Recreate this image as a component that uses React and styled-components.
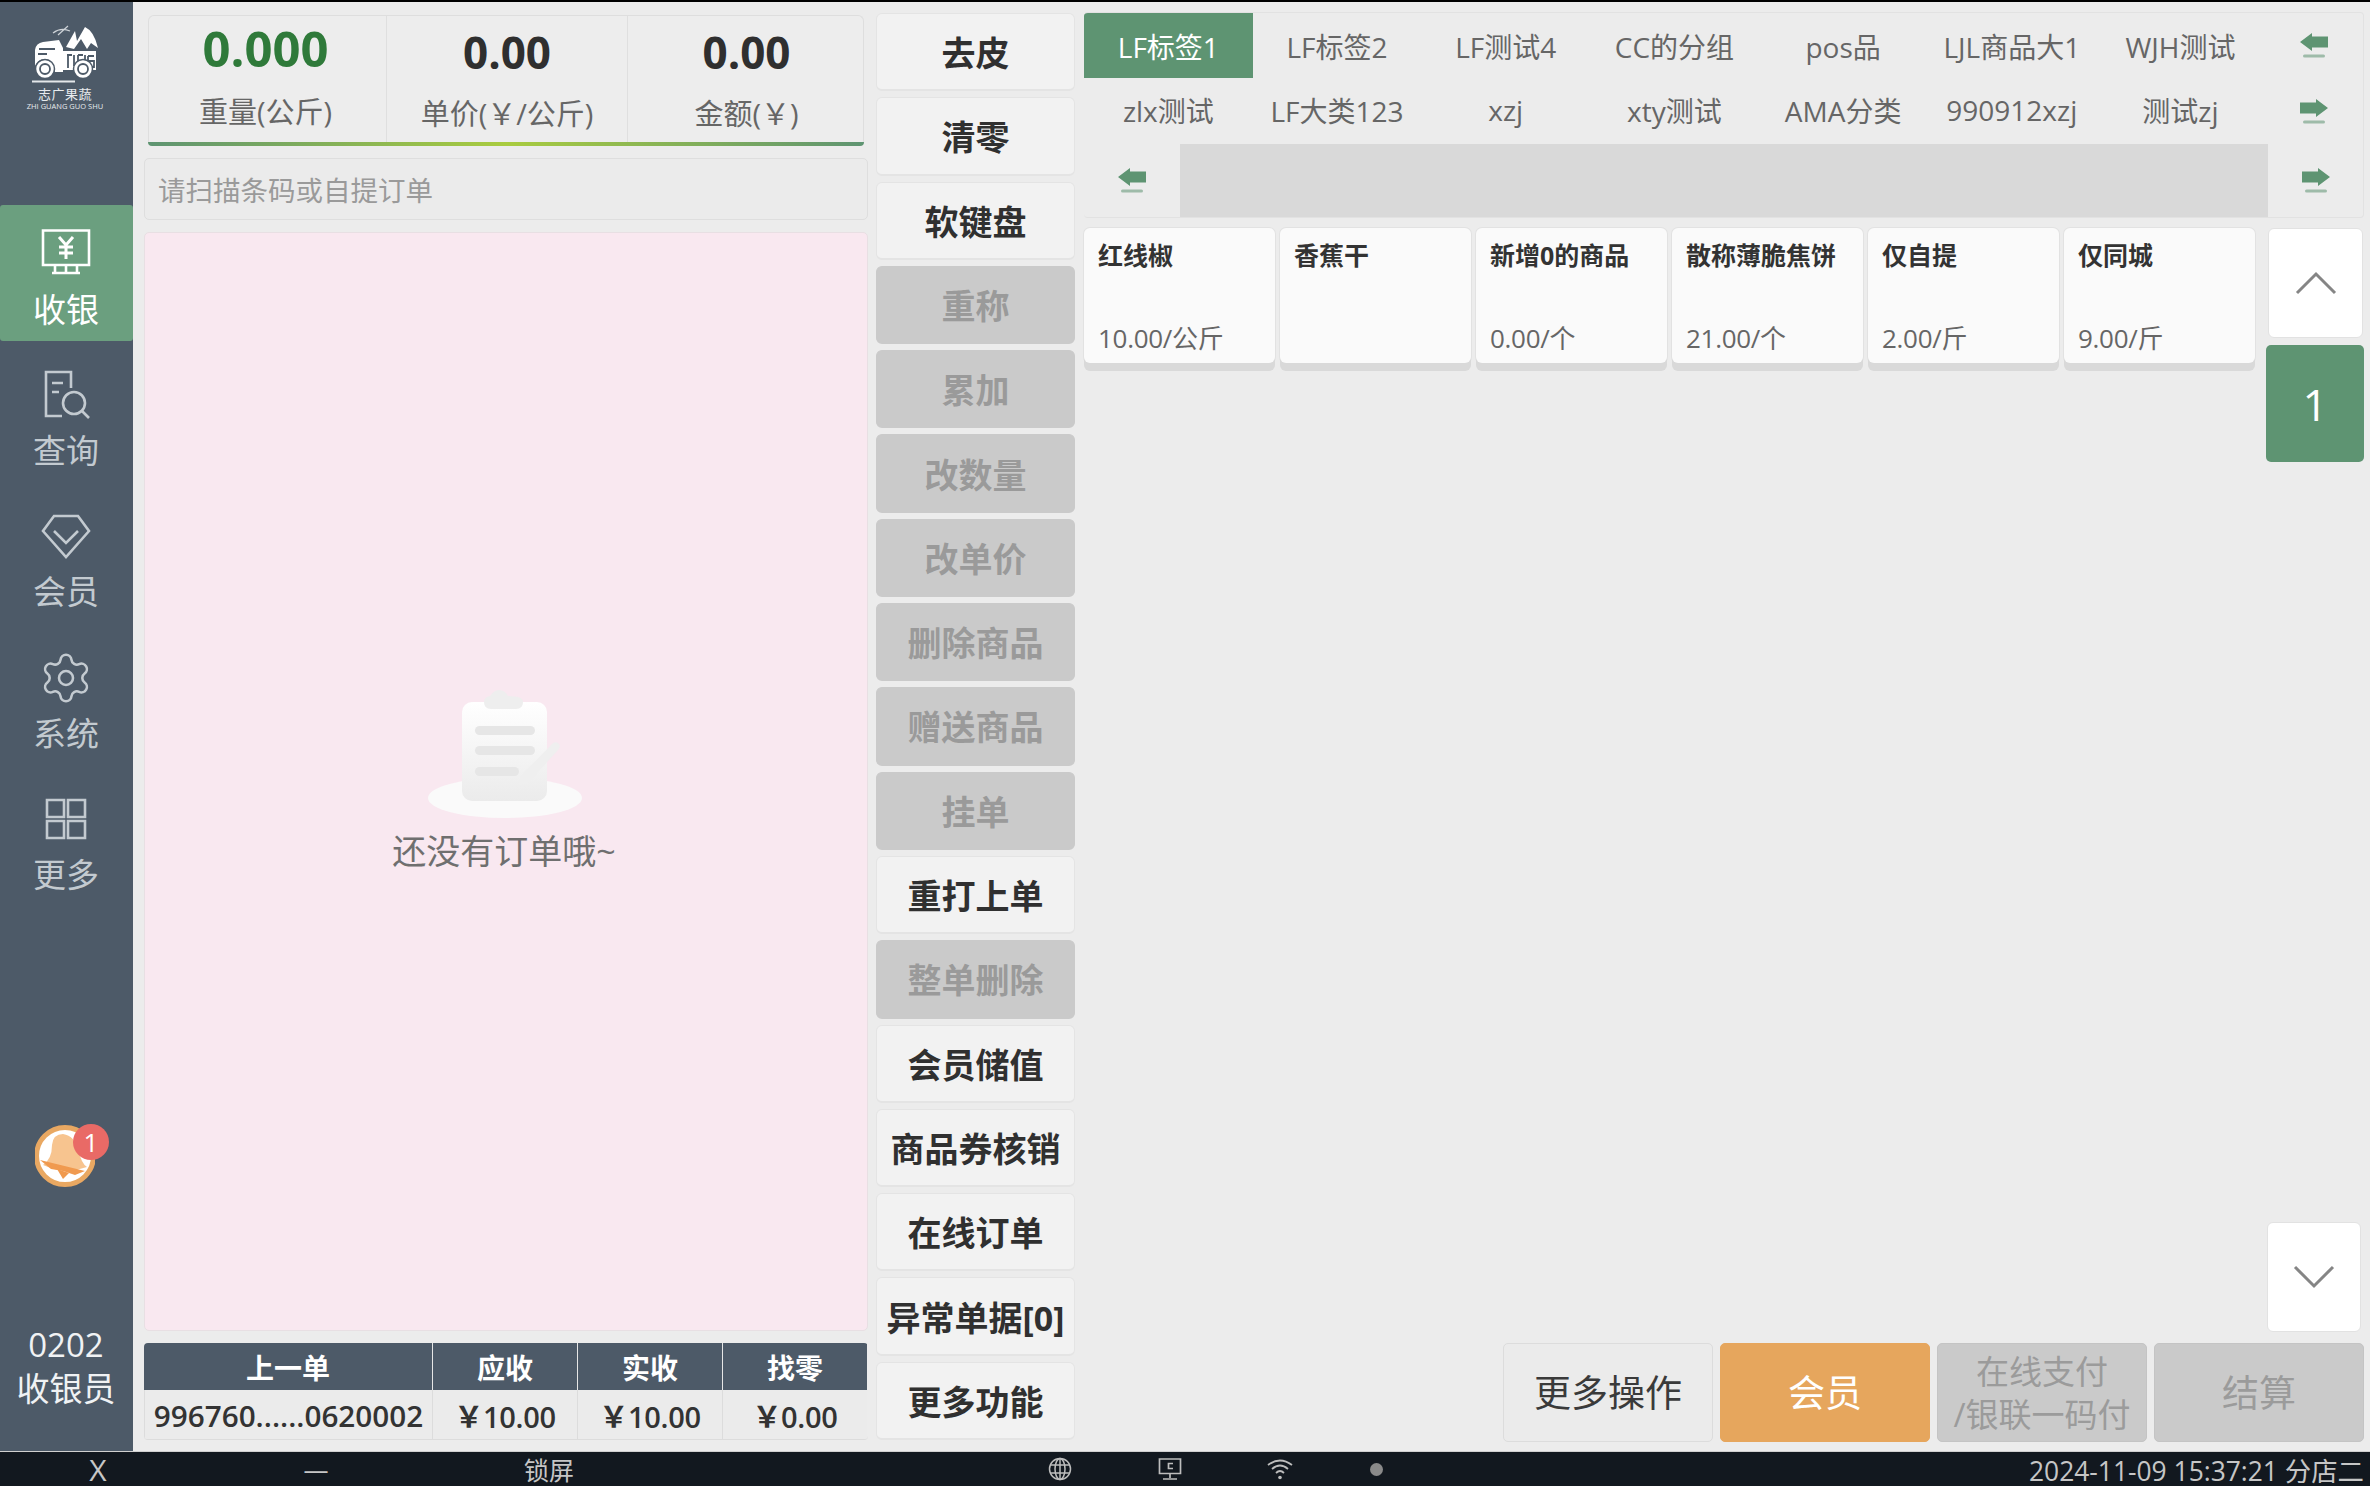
import React from "react";
import styled, { createGlobalStyle } from "styled-components";
import { Settings } from "lucide-react";

const FONT = `"Open Sans", "Noto Sans CJK SC", sans-serif`;
const SIDE = "#4d5a68";
const GREEN = "#5e9472";

const Global = createGlobalStyle`
html, body { margin: 0; padding: 0; background: #ececec; }
body { width: 2370px; height: 1486px; overflow: hidden; font-family: ${FONT}; }
* { box-sizing: border-box; }
`;

const Screen = styled.div`
width: 2370px;
height: 1486px;
display: flex;
flex-direction: column;
background: #ececec;
border-top: 2px solid #000;
`;
const Body = styled.div`
flex: 1;
min-height: 0;
display: flex;
`;

/* left nav */
const Sidebar = styled.nav`
width: 133px;
background: ${SIDE};
display: flex;
flex-direction: column;
align-items: stretch;
`;
const LogoBox = styled.div`
height: 203px;
padding: 20px 3px 0 0;
display: flex;
flex-direction: column;
align-items: center;
color: #fff;
`;
const LogoCn = styled.div`
font-size: 13px;
line-height: 14px;
margin-top: -1px;
letter-spacing: 0.5px;
color: #e8ebee;
`;
const LogoEn = styled.div`
font-size: 7.5px;
line-height: 9px;
margin-top: 1px;
white-space: nowrap;
color: #e8ebee;
`;
const NavItem = styled.div`
height: ${(p) => (p.$active ? "136px" : "141.4px")};
margin-bottom: ${(p) => (p.$active ? "5px" : "0")};
padding: 24px 1px 0 0;
display: flex;
flex-direction: column;
align-items: center;
border-radius: 3px;
background: ${(p) => (p.$active ? "#6b9f7f" : "transparent")};
color: ${(p) => (p.$active ? "#fff" : "#c3cad0")};
font-size: 33px;
line-height: 44px;
`;
const NavIcon = styled.svg`
width: 54px;
height: 50px;
margin-bottom: 9px;
fill: none;
stroke: currentColor;
stroke-width: 2.6;
`;
const GearIcon = styled(Settings)`
width: 56px;
height: 56px;
margin: -3px 0 6px;
stroke-width: 1.1;
`;
const BellWrap = styled.div`
position: relative;
width: 60px;
height: 62px;
margin: 213px 0 0 35px;
`;
const Badge = styled.span`
position: absolute;
top: -1px;
left: 38px;
width: 36px;
height: 36px;
border-radius: 50%;
background: #e96a66;
color: #fff;
font-size: 26px;
line-height: 36px;
text-align: center;
`;
const Cashier = styled.div`
margin-top: 136px;
padding-right: 1px;
text-align: center;
color: #f0f2f4;
font-size: 33px;
line-height: 44px;
`;

/* weigh + order column */
const OrderCol = styled.section`
width: 724px;
margin-left: 11px;
padding: 13px 0 11px;
display: flex;
flex-direction: column;
`;
const Scale = styled.div`
margin: 0 4px;
height: 131px;
display: grid;
grid-template-columns: 237px 241px 238px;
background: #ededed;
border: 1px solid #dedede;
border-bottom: none;
border-radius: 6px 6px 5px 5px;
position: relative;
&::after {
  content: "";
  position: absolute;
  left: -1px;
  right: -1px;
  bottom: 0;
  height: 4px;
  border-radius: 0 0 5px 5px;
  background: linear-gradient(90deg, ${GREEN}, #a9cc3f 50%, ${GREEN});
}
`;
const ScaleCell = styled.div`
display: flex;
flex-direction: column;
align-items: center;
padding-right: ${(p) => (p.$first ? "4px" : "0")};
border-left: ${(p) => (p.$first ? "none" : "1px solid #dfdfdf")};
`;
const ScaleValue = styled.div`
height: ${(p) => (p.$main ? "72px" : "76px")};
display: flex;
align-items: center;
font-weight: 700;
font-size: ${(p) => (p.$main ? "49px" : "44px")};
margin-top: ${(p) => (p.$main ? "-4px" : "-6px")};
padding-top: ${(p) => (p.$main ? "0" : "8px")};
color: ${(p) => (p.$main ? "#2f7a3a" : "#2f2f2f")};
`;
const ScaleLabel = styled.div`
font-size: 29px;
line-height: 38px;
margin-top: ${(p) => (p.$main ? "9px" : "9px")};
color: #666;
white-space: nowrap;
`;
const Scan = styled.div`
height: 62px;
margin-top: 12px;
padding-left: 13px;
display: flex;
align-items: center;
font-size: 27.5px;
color: #9a9a9a;
background: #ebebeb;
border: 1px solid #dedede;
border-radius: 5px;
`;
const OrderList = styled.div`
flex: 1;
margin-top: 12px;
display: flex;
flex-direction: column;
align-items: center;
justify-content: center;
background: #f9e8f0;
border: 1px solid #e8dfe3;
border-radius: 5px;
`;
const EmptyText = styled.div`
margin: 8px 4px 0 0;
font-size: 34px;
line-height: 46px;
color: #6f6f6f;
`;
const LastOrder = styled.div`
margin-top: 12px;
height: 97px;
display: grid;
grid-template-columns: 288px 145px 145px 145px;
grid-template-rows: 47px 50px;
border-radius: 4px;
overflow: hidden;
border-bottom: 1px solid #dcdcdc;
`;
const HeadCell = styled.div`
display: flex;
align-items: center;
justify-content: center;
background: ${SIDE};
color: #fff;
font-size: 28px;
font-weight: 700;
border-left: ${(p) => (p.$first ? "none" : "1px solid #e6e6e6")};
`;
const DataCell = styled.div`
display: flex;
align-items: center;
justify-content: center;
background: #ebebeb;
color: #333;
font-size: ${(p) => (p.$first ? "29.7px" : "29px")};
font-weight: 600;
white-space: nowrap;
letter-spacing: ${(p) => (p.$first ? "0" : "-0.3px")};
border-left: 1px solid #dcdcdc;
`;

/* action buttons column */
const ActionCol = styled.div`
width: 199px;
margin-left: 8px;
padding: 11px 0 11px;
display: grid;
grid-template-rows: repeat(17, 1fr);
gap: 6px;
`;
const ActionBtn = styled.button`
padding: 0;
font-family: ${FONT};
font-size: 34px;
font-weight: 700;
white-space: nowrap;
border-radius: 6px;
border: 1px solid ${(p) => (p.$off ? "#cacaca" : "#e4e4e4")};
border-bottom-width: 2px;
background: ${(p) => (p.$off ? "#cacaca" : "#f2f2f2")};
color: ${(p) => (p.$off ? "#9a9a9a" : "#303030")};
`;

/* goods */
const GoodsCol = styled.section`
width: 1280px;
margin-left: 9px;
padding: 10px 0 9px;
display: flex;
flex-direction: column;
`;
const TabsPanel = styled.div`
height: 206px;
display: grid;
grid-template-columns: repeat(7, 168.7px) 1fr;
grid-template-rows: 65px 66px 1fr;
background: #ececec;
border: 1px solid #e2e2e2;
border-left: none;
border-radius: 4px;
overflow: hidden;
`;
const Tab = styled.div`
display: flex;
align-items: center;
justify-content: center;
padding-bottom: ${(p) => (p.$second ? "2px" : "0")};
font-size: 28px;
white-space: nowrap;
background: ${(p) => (p.$active ? GREEN : "transparent")};
color: ${(p) => (p.$active ? "#fff" : "#666")};
`;
const ArrowCell = styled.div`
display: flex;
align-items: center;
justify-content: center;
`;
const SubRow = styled.div`
grid-column: 1 / -1;
display: grid;
grid-template-columns: 96px 1fr 95px;
`;
const SubTrack = styled.div`
background: #d9d9d9;
`;
const GoodsRow = styled.div`
flex: 1;
min-height: 0;
margin-top: 10px;
display: flex;
justify-content: space-between;
`;
const GoodsGrid = styled.div`
display: grid;
grid-template-columns: repeat(6, 191px);
grid-auto-rows: 135px;
column-gap: 5px;
align-content: start;
`;
const Card = styled.div`
padding: 11px 14px 7px;
display: flex;
flex-direction: column;
justify-content: space-between;
background: #fafafa;
border-radius: 6px;
box-shadow: 0 8px 0 #d9d9d9, 0 0 0 1px #e2e2e2;
`;
const CardName = styled.div`
font-size: 25px;
line-height: 32px;
font-weight: 700;
color: #333;
white-space: nowrap;
`;
const CardPrice = styled.div`
font-size: 26px;
line-height: 36px;
color: #666;
letter-spacing: -0.3px;
`;
const Pager = styled.div`
width: 98px;
display: flex;
flex-direction: column;
align-items: stretch;
`;
const PageBtn = styled.div`
height: 110px;
margin: ${(p) => (p.$bottom ? "auto 3px 0 1px" : "0 1px 0 2px")};
display: flex;
align-items: center;
justify-content: center;
background: #fff;
border: 1px solid #e2e2e2;
border-radius: 6px;
color: #858585;
`;
const PageNum = styled.div`
height: 117px;
margin-top: 7px;
display: flex;
align-items: center;
justify-content: center;
background: ${GREEN};
border-radius: 5px;
color: #fff;
font-size: 44px;
`;
const Footer = styled.div`
margin-top: 11px;
display: flex;
justify-content: flex-end;
gap: 7px;
`;
const FootBtn = styled.button`
width: 210px;
height: 99px;
padding: 0;
font-family: ${FONT};
font-size: ${(p) => (p.$small ? "33px" : "37px")};
line-height: 43px;
border-radius: 5px;
border: 1px solid ${(p) => p.$border};
background: ${(p) => p.$bg};
color: ${(p) => p.$color};
`;

/* status bar */
const StatusBar = styled.div`
height: 35px;
display: flex;
align-items: center;
background: #12181f;
color: #c6c6c6;
font-size: 25px;
border-top: 1px solid #d0d0d0;
`;
const Slot = styled.div`
width: ${(p) => p.$w}px;
display: flex;
align-items: center;
justify-content: center;
font-size: ${(p) => p.$size || 25}px;
`;
const Clock = styled.div`
margin-left: auto;
padding-right: 6px;
font-size: 26.4px;
white-space: nowrap;
`;
const Dot = styled.span`
width: 13px;
height: 13px;
border-radius: 50%;
background: #8a8a8a;
`;

const Logo = () => (
  <svg width="80" height="66" viewBox="0 0 80 66">
    <path fill="#fff" d="M10 44 V28 Q11 21 18 20 L34 18 L38 26 V50 H30 Q28 37 20 37 Q13 37 10 44 Z" />
    <path d="M14 27 H30 M13 32 H22" stroke={SIDE} strokeWidth="2" fill="none" />
    <path fill="#fff" d="M36 29 H71 V48 H36 Z" />
    <path d="M43 33 V46 M42 33 H47 M49 33 V44 M53 33 H58 M53 33 V45 M60 33 V40 M63 34 H69 M63 34 V39 H69 V45 H63" stroke={SIDE} strokeWidth="1.8" fill="none" />
    <path fill="#fff" d="M41 25 L50 9 L52 19 L60 5 Q69 9 73 26 L66 21 L62 27 L56 17 L49 27 Z" />
    <path d="M28 11 Q36 5 45 9 M33 13 L43 4" stroke="#cfd4d9" strokeWidth="1.2" fill="none" />
    <circle cx="20" cy="47" r="9.5" fill="#fff" stroke={SIDE} strokeWidth="1.5" />
    <circle cx="20" cy="47" r="5" fill="none" stroke={SIDE} strokeWidth="1.8" />
    <circle cx="58" cy="47" r="9.5" fill="#fff" stroke={SIDE} strokeWidth="1.5" />
    <circle cx="58" cy="47" r="5" fill="none" stroke={SIDE} strokeWidth="1.8" />
    <path d="M7 59.5 H50" stroke="#e4e7ea" strokeWidth="2" />
  </svg>
);

const CashIcon = () => (
  <NavIcon viewBox="0 0 54 50">
    <path d="M4 1.5 H50 V36 H4 Z M4 30 V36 M27 36 V44 M13 44 H41 M16 36 V44 M38 36 V44" />
    <path d="M20 8 L27 16 L34 8 M27 16 V30 M20 18 H34 M20 24 H34" strokeWidth="3" />
  </NavIcon>
);
const SearchIcon = () => (
  <NavIcon viewBox="0 0 54 50">
    <path d="M32 18 V2 H7 V46 H23 M13 13 H24 M13 22 H20" />
    <circle cx="35" cy="33" r="11" />
    <path d="M43 41 L50 48" />
  </NavIcon>
);
const MemberIcon = () => (
  <NavIcon viewBox="0 0 54 50">
    <path d="M15 5 H39 L50 20 L27 46 L4 20 Z M15 20 L27 32 L39 20" />
  </NavIcon>
);
const GridIcon = () => (
  <NavIcon viewBox="0 0 54 50">
    <path d="M8 6 H25 V23 H8 Z M29 6 H46 V23 H29 Z M8 27 H25 V44 H8 Z M29 27 H46 V44 H29 Z" />
  </NavIcon>
);

const Bell = () => (
  <svg width="60" height="62" viewBox="0 0 60 62">
    <circle cx="30" cy="31" r="28.5" fill="#fff" stroke="#e9a862" strokeWidth="5" />
    <path d="M8 40 Q17 34 17 20 Q18 9 28 9 Q40 11 44 26 Q46 38 52 42 Q30 50 8 40 Z" fill="#f7c48f" />
    <path d="M5 35 L50 46 L40 50 L28 46 L16 44 Z" fill="#f09a4f" />
    <path d="M22 44 L34 48 L28 54 Z" fill="#f09a4f" />
  </svg>
);

const Arrow = ({ dir }) => (
  <svg width="30" height="25" viewBox="0 0 30 25" fill={GREEN}>
    {dir === "left" ? (
      <path d="M1 9 L13 0 V3.5 H29 V14.5 H13 V18 Z" />
    ) : (
      <path d="M29 9 L17 0 V3.5 H1 V14.5 H17 V18 Z" />
    )}
    <rect x="4" y="21.5" width="22" height="3" rx="1.5" opacity="0.55" />
  </svg>
);

const Chevron = ({ up }) => (
  <svg width="44" height="24" viewBox="0 0 44 24" fill="none" stroke="currentColor" strokeWidth="3">
    <path d={up ? "M3 22 L22 3 L41 22" : "M3 2 L22 21 L41 2"} />
  </svg>
);

const Clipboard = () => (
  <svg width="156" height="130" viewBox="0 0 156 130">
    <defs>
      <linearGradient id="board" x1="0" y1="0" x2="0" y2="1">
        <stop offset="0" stopColor="#fff" />
        <stop offset="1" stopColor="#ebebeb" />
      </linearGradient>
    </defs>
    <ellipse cx="77" cy="108" rx="77" ry="20" fill="#fafafa" />
    <rect x="34" y="12" width="85" height="99" rx="10" fill="url(#board)" />
    <path d="M56 12 Q56 7 62 6 Q66 0 71 0 Q77 0 80 6 Q95 6 95 12 Q95 19 88 19 H63 Q56 19 56 12 Z" fill="#eeeeee" />
    <rect x="47" y="36" width="60" height="9" rx="4.5" fill="#e6e6e6" />
    <rect x="47" y="56" width="60" height="9" rx="4.5" fill="#e6e6e6" />
    <rect x="47" y="77" width="44" height="9" rx="4.5" fill="#e6e6e6" />
    <path d="M92 95 V87 L125 53 Q129 51 131 54 Q133 57 130 60 L100 93 Z" fill="#efefef" />
  </svg>
);

const GlobeIcon = () => (
  <svg width="24" height="24" viewBox="0 0 24 24" fill="none" stroke="#bdbdbd" strokeWidth="1.5">
    <circle cx="12" cy="12" r="10.5" />
    <ellipse cx="12" cy="12" rx="5" ry="10.5" />
    <path d="M12 1.5 V22.5 M2 8 H22 M2 16 H22" />
  </svg>
);
const ScreenIcon = () => (
  <svg width="24" height="24" viewBox="0 0 24 24" fill="none" stroke="#bdbdbd" strokeWidth="1.7">
    <path d="M1.5 2 H22.5 V16.5 H1.5 Z M12 16.5 V21 M5 22 H19" />
    <path d="M15 6.5 H10.5 V11.5 H15" />
  </svg>
);
const WifiIcon = () => (
  <svg width="26" height="22" viewBox="0 0 26 22" fill="none" stroke="#bdbdbd" strokeWidth="1.8">
    <path d="M1 7 Q13 -2 25 7 M5 11 Q13 4 21 11 M9 15 Q13 11 17 15" />
    <circle cx="13" cy="19.5" r="1.8" fill="#bdbdbd" stroke="none" />
  </svg>
);

const NAV = [
  { label: "收银", Icon: CashIcon, active: true },
  { label: "查询", Icon: SearchIcon },
  { label: "会员", Icon: MemberIcon },
  { label: "系统", Icon: GearIcon },
  { label: "更多", Icon: GridIcon },
];

const ACTIONS = [
  ["去皮"], ["清零"], ["软键盘"], ["重称", 1], ["累加", 1], ["改数量", 1], ["改单价", 1],
  ["删除商品", 1], ["赠送商品", 1], ["挂单", 1], ["重打上单"], ["整单删除", 1],
  ["会员储值"], ["商品券核销"], ["在线订单"], ["异常单据[0]"], ["更多功能"],
];

const ROW1 = ["LF标签1", "LF标签2", "LF测试4", "CC的分组", "pos品", "LJL商品大1", "WJH测试"];
const ROW2 = ["zlx测试", "LF大类123", "xzj", "xty测试", "AMA分类", "990912xzj", "测试zj"];

const GOODS = [
  ["红线椒", "10.00/公斤"],
  ["香蕉干", ""],
  ["新增0的商品", "0.00/个"],
  ["散称薄脆焦饼", "21.00/个"],
  ["仅自提", "2.00/斤"],
  ["仅同城", "9.00/斤"],
];

const App = () => {
  return (
    <Screen>
      <Global />
      <Body>
        <Sidebar>
          <LogoBox>
            <Logo />
            <LogoCn>志广果蔬</LogoCn>
            <LogoEn>ZHI GUANG GUO SHU</LogoEn>
          </LogoBox>
          {NAV.map(({ label, Icon, active }) => (
            <NavItem key={label} $active={active}>
              <Icon />
              {label}
            </NavItem>
          ))}
          <BellWrap>
            <Bell />
            <Badge>1</Badge>
          </BellWrap>
          <Cashier>
            0202
            <br />
            收银员
          </Cashier>
        </Sidebar>

        <OrderCol>
          <Scale>
            <ScaleCell $first>
              <ScaleValue $main>0.000</ScaleValue>
              <ScaleLabel $main>重量(公斤)</ScaleLabel>
            </ScaleCell>
            <ScaleCell>
              <ScaleValue>0.00</ScaleValue>
              <ScaleLabel>单价(￥/公斤)</ScaleLabel>
            </ScaleCell>
            <ScaleCell>
              <ScaleValue>0.00</ScaleValue>
              <ScaleLabel>金额(￥)</ScaleLabel>
            </ScaleCell>
          </Scale>
          <Scan>请扫描条码或自提订单</Scan>
          <OrderList>
            <Clipboard />
            <EmptyText>还没有订单哦~</EmptyText>
          </OrderList>
          <LastOrder>
            <HeadCell $first>上一单</HeadCell>
            <HeadCell>应收</HeadCell>
            <HeadCell>实收</HeadCell>
            <HeadCell>找零</HeadCell>
            <DataCell $first>996760......0620002</DataCell>
            <DataCell>￥10.00</DataCell>
            <DataCell>￥10.00</DataCell>
            <DataCell>￥0.00</DataCell>
          </LastOrder>
        </OrderCol>

        <ActionCol>
          {ACTIONS.map(([label, off]) => (
            <ActionBtn key={label} $off={off}>
              {label}
            </ActionBtn>
          ))}
        </ActionCol>

        <GoodsCol>
          <TabsPanel>
            {ROW1.map((t, i) => (
              <Tab key={t} $active={i === 0}>
                {t}
              </Tab>
            ))}
            <ArrowCell>
              <Arrow dir="left" />
            </ArrowCell>
            {ROW2.map((t) => (
              <Tab key={t} $second>{t}</Tab>
            ))}
            <ArrowCell>
              <Arrow dir="right" />
            </ArrowCell>
            <SubRow>
              <ArrowCell>
                <Arrow dir="left" />
              </ArrowCell>
              <SubTrack />
              <ArrowCell>
                <Arrow dir="right" />
              </ArrowCell>
            </SubRow>
          </TabsPanel>
          <GoodsRow>
            <GoodsGrid>
              {GOODS.map(([name, price]) => (
                <Card key={name}>
                  <CardName>{name}</CardName>
                  <CardPrice>{price}</CardPrice>
                </Card>
              ))}
            </GoodsGrid>
            <Pager>
              <PageBtn>
                <Chevron up />
              </PageBtn>
              <PageNum>1</PageNum>
              <PageBtn $bottom>
                <Chevron />
              </PageBtn>
            </Pager>
          </GoodsRow>
          <Footer>
            <FootBtn $bg="#ebebeb" $border="#dcdcdc" $color="#3a3a3a">更多操作</FootBtn>
            <FootBtn $bg="#e6a65d" $border="#e6a65d" $color="#fff">会员</FootBtn>
            <FootBtn $small $bg="#cacaca" $border="#c4c4c4" $color="#9b9b9b">
              在线支付
              <br />
              /银联一码付
            </FootBtn>
            <FootBtn $bg="#cacaca" $border="#c4c4c4" $color="#9b9b9b">结算</FootBtn>
          </Footer>
        </GoodsCol>
      </Body>

      <StatusBar>
        <Slot $w={196} $size={30}>X</Slot>
        <Slot $w={240}>—</Slot>
        <Slot $w={226}>锁屏</Slot>
        <Slot $w={343} />
        <Slot $w={110}><GlobeIcon /></Slot>
        <Slot $w={110}><ScreenIcon /></Slot>
        <Slot $w={110}><WifiIcon /></Slot>
        <Slot $w={82}><Dot /></Slot>
        <Clock>2024-11-09 15:37:21 分店二</Clock>
      </StatusBar>
    </Screen>
  );
};

export default App;
